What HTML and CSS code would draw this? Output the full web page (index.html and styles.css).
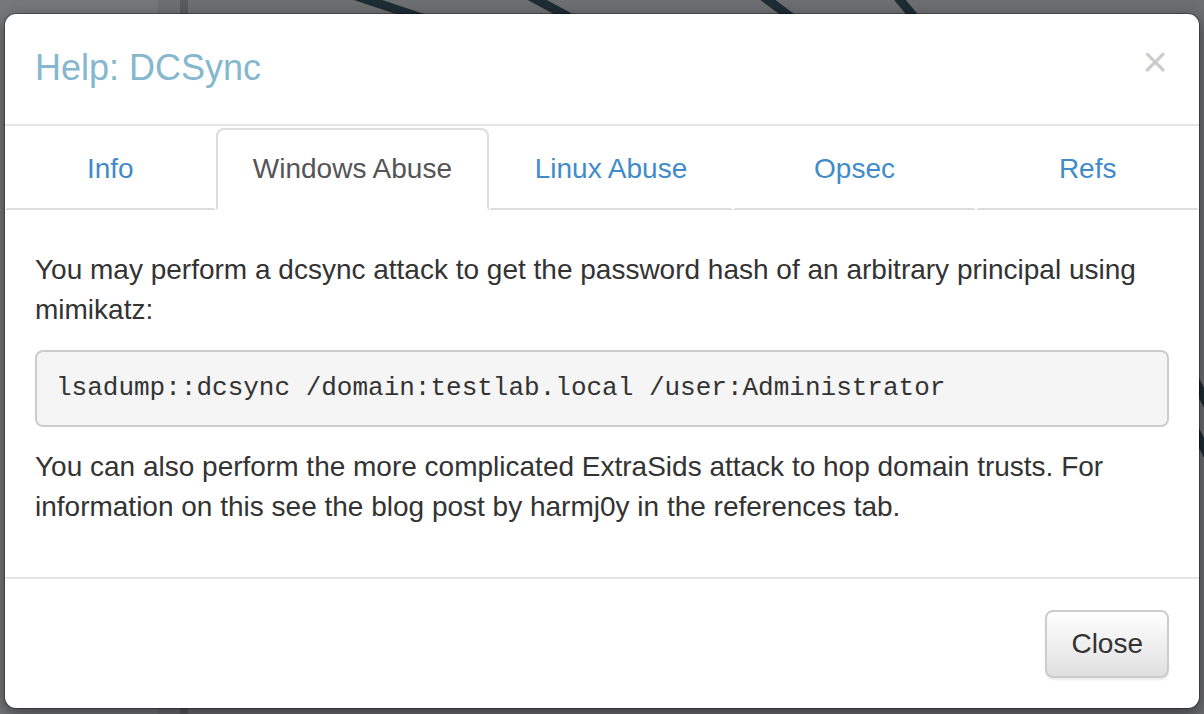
FILE: index.html
```html
<!DOCTYPE html>
<html lang="en">
<head>
<meta charset="utf-8">
<title>Help: DCSync</title>
<link rel="stylesheet" href="styles.css">
</head>
<body>
<div class="backdrop-art" aria-hidden="true">
  <svg width="1204" height="714" viewBox="0 0 1204 714">
    <rect x="0" y="0" width="158" height="714" fill="#77787a"/>
    <rect x="180" y="0" width="8" height="714" fill="#5a5b5d"/>
    <g stroke="#1e2c34" stroke-width="9" fill="none">
      <line x1="350" y1="-6" x2="440" y2="24"/>
      <line x1="526" y1="-6" x2="582" y2="24"/>
      <line x1="760" y1="-6" x2="800" y2="24"/>
      <line x1="895" y1="-6" x2="920" y2="24"/>
      <line x1="1195" y1="380" x2="1215" y2="420"/>
      <line x1="1195" y1="430" x2="1215" y2="470"/>
    </g>
  </svg>
</div>
<div class="modal">
  <div class="modal-content">
    <div class="modal-header">
      <button class="close" type="button">×</button>
      <h4 class="modal-title">Help: DCSync</h4>
    </div>
    <ul class="nav-tabs">
      <li class="tab"><a href="#">Info</a></li>
      <li class="tab active"><a href="#">Windows Abuse</a></li>
      <li class="tab"><a href="#">Linux Abuse</a></li>
      <li class="tab"><a href="#">Opsec</a></li>
      <li class="tab"><a href="#">Refs</a></li>
    </ul>
    <div class="modal-body">
      <p>You may perform a dcsync attack to get the password hash of an arbitrary principal using mimikatz:</p>
      <pre>lsadump::dcsync /domain:testlab.local /user:Administrator</pre>
      <p>You can also perform the more complicated ExtraSids attack to hop domain trusts. For information on this see the blog post by harmj0y in the references tab.</p>
    </div>
    <div class="modal-footer">
      <button class="btn" type="button">Close</button>
    </div>
  </div>
</div>
</body>
</html>
```
FILE: styles.css
```css
html, body {
  margin: 0;
  height: 714px;
  overflow: hidden;
}

body {
  position: relative;
  background: #6e6f71;
  font-family: "Liberation Sans", Arial, sans-serif;
  font-size: 28px;
  line-height: 40px;
  color: #333;
}

.backdrop-art {
  position: absolute;
  left: 0;
  top: 0;
  z-index: 0;
}

.backdrop-art svg {
  display: block;
}

.modal {
  position: relative;
  z-index: 1;
  padding: 13px 4px 0 4px;
}

.modal-content {
  background: #fff;
  border: 1px solid rgba(0, 0, 0, 0.3);
  border-radius: 12px;
  background-clip: padding-box;
  box-shadow: 0 6px 18px rgba(0, 0, 0, 0.45);
  overflow: hidden;
}

.modal-header {
  padding: 30px 30px 32px 30px;
  border-bottom: 2px solid #e5e5e5;
}

.modal-title {
  margin: 0;
  font-size: 36px;
  line-height: 48px;
  font-weight: normal;
  color: #85b7ce;
}

.close {
  float: right;
  margin-top: -4px;
  margin-right: 1px;
  padding: 0;
  border: 0;
  background: transparent;
  font-family: "Liberation Sans", Arial, sans-serif;
  font-size: 44px;
  line-height: 44px;
  font-weight: normal;
  color: #000;
  opacity: 0.2;
  cursor: pointer;
}

.nav-tabs {
  list-style: none;
  margin: 0;
  padding: 2px 0 0 0;
  display: grid;
  grid-template-columns: 211fr 274fr 244fr 244fr 223fr;
}

.tab a {
  display: block;
  text-align: center;
  text-decoration: none;
  color: #428bca;
  padding: 19px 20px;
  line-height: 40px;
  border: 2px solid transparent;
  border-bottom-color: #ddd;
  border-radius: 8px 8px 0 0;
}

.tab.active a {
  color: #555;
  background: #fff;
  border-color: #ddd;
  border-bottom-color: transparent;
}

.modal-body {
  padding: 40px 30px 30px 30px;
}

.modal-body p {
  margin: 0 0 20px 0;
}

.modal-body pre {
  margin: 0 0 20px 0;
  padding: 18px 19px;
  font-family: "Liberation Mono", "Courier New", monospace;
  font-size: 26px;
  line-height: 37px;
  color: #333;
  background: #f5f5f5;
  border: 2px solid #ccc;
  border-radius: 8px;
  white-space: pre-wrap;
}

.modal-footer {
  padding: 31px 30px 30px 30px;
  border-top: 2px solid #e5e5e5;
  display: flex;
  justify-content: flex-end;
}

.btn {
  font-family: "Liberation Sans", Arial, sans-serif;
  font-size: 28px;
  line-height: 40px;
  padding: 12px 24px;
  color: #333;
  border: 2px solid #ccc;
  border-radius: 8px;
  background: linear-gradient(to bottom, #fff 0%, #e0e0e0 100%);
  box-shadow: inset 0 2px 0 rgba(255, 255, 255, 0.15), 0 2px 2px rgba(0, 0, 0, 0.075);
  cursor: pointer;
}
```
